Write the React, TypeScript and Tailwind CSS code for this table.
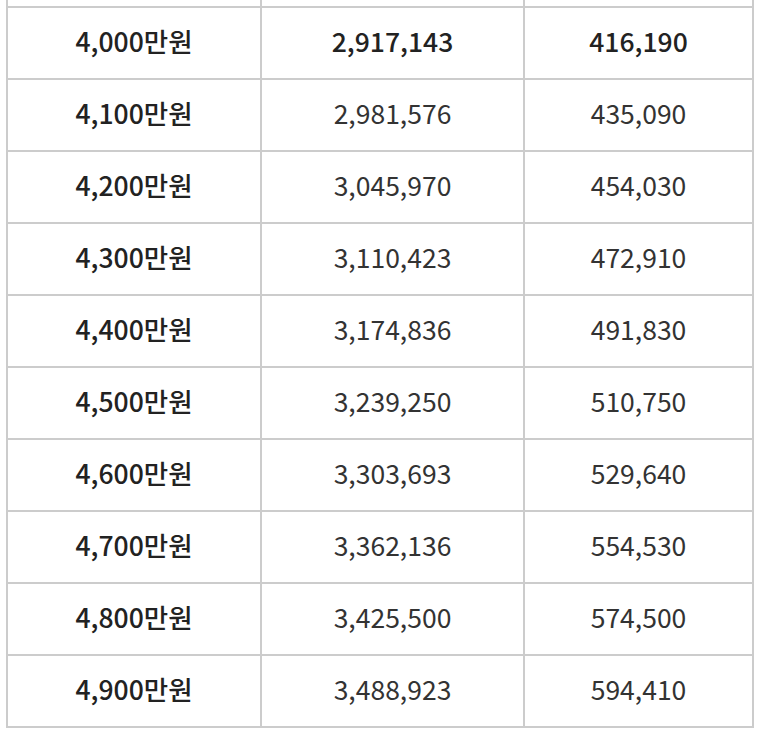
const rows = [
  ['4,000만원', '2,917,143', '416,190'],
  ['4,100만원', '2,981,576', '435,090'],
  ['4,200만원', '3,045,970', '454,030'],
  ['4,300만원', '3,110,423', '472,910'],
  ['4,400만원', '3,174,836', '491,830'],
  ['4,500만원', '3,239,250', '510,750'],
  ['4,600만원', '3,303,693', '529,640'],
  ['4,700만원', '3,362,136', '554,530'],
  ['4,800만원', '3,425,500', '574,500'],
  ['4,900만원', '3,488,923', '594,410'],
]

export default function App() {
  return (
    <div className="w-[766px] h-[746px] bg-white overflow-hidden" style={{ fontFamily: '"Noto Sans CJK KR", "Noto Sans", sans-serif' }}>
      <div className="ml-[6px] w-[748px] grid grid-cols-[254px_263px_229px] border-l-2 border-[#cccccc] text-[26.5px] leading-none text-[#222222]">
        {/* previous row, cut off at the top */}
        <div className="h-[8px] border-r-2 border-b-2 border-[#cccccc]" />
        <div className="h-[8px] border-r-2 border-b-2 border-[#cccccc]" />
        <div className="h-[8px] border-r-2 border-b-2 border-[#cccccc]" />
        {rows.map((r, i) => (
          <div key={i} className="contents">
            <div className="h-[72px] flex items-center justify-center pb-[4px] border-r-2 border-b-2 border-[#cccccc] font-medium">
              {r[0]}
            </div>
            <div className={`h-[72px] flex items-center justify-center pb-[4px] border-r-2 border-b-2 border-[#cccccc] ${i === 0 ? 'font-medium' : 'font-normal text-[#333333]'}`}>
              {r[1]}
            </div>
            <div className={`h-[72px] flex items-center justify-center pb-[4px] border-r-2 border-b-2 border-[#cccccc] ${i === 0 ? 'font-medium' : 'font-normal text-[#333333]'}`}>
              {r[2]}
            </div>
          </div>
        ))}
      </div>
    </div>
  )
}
